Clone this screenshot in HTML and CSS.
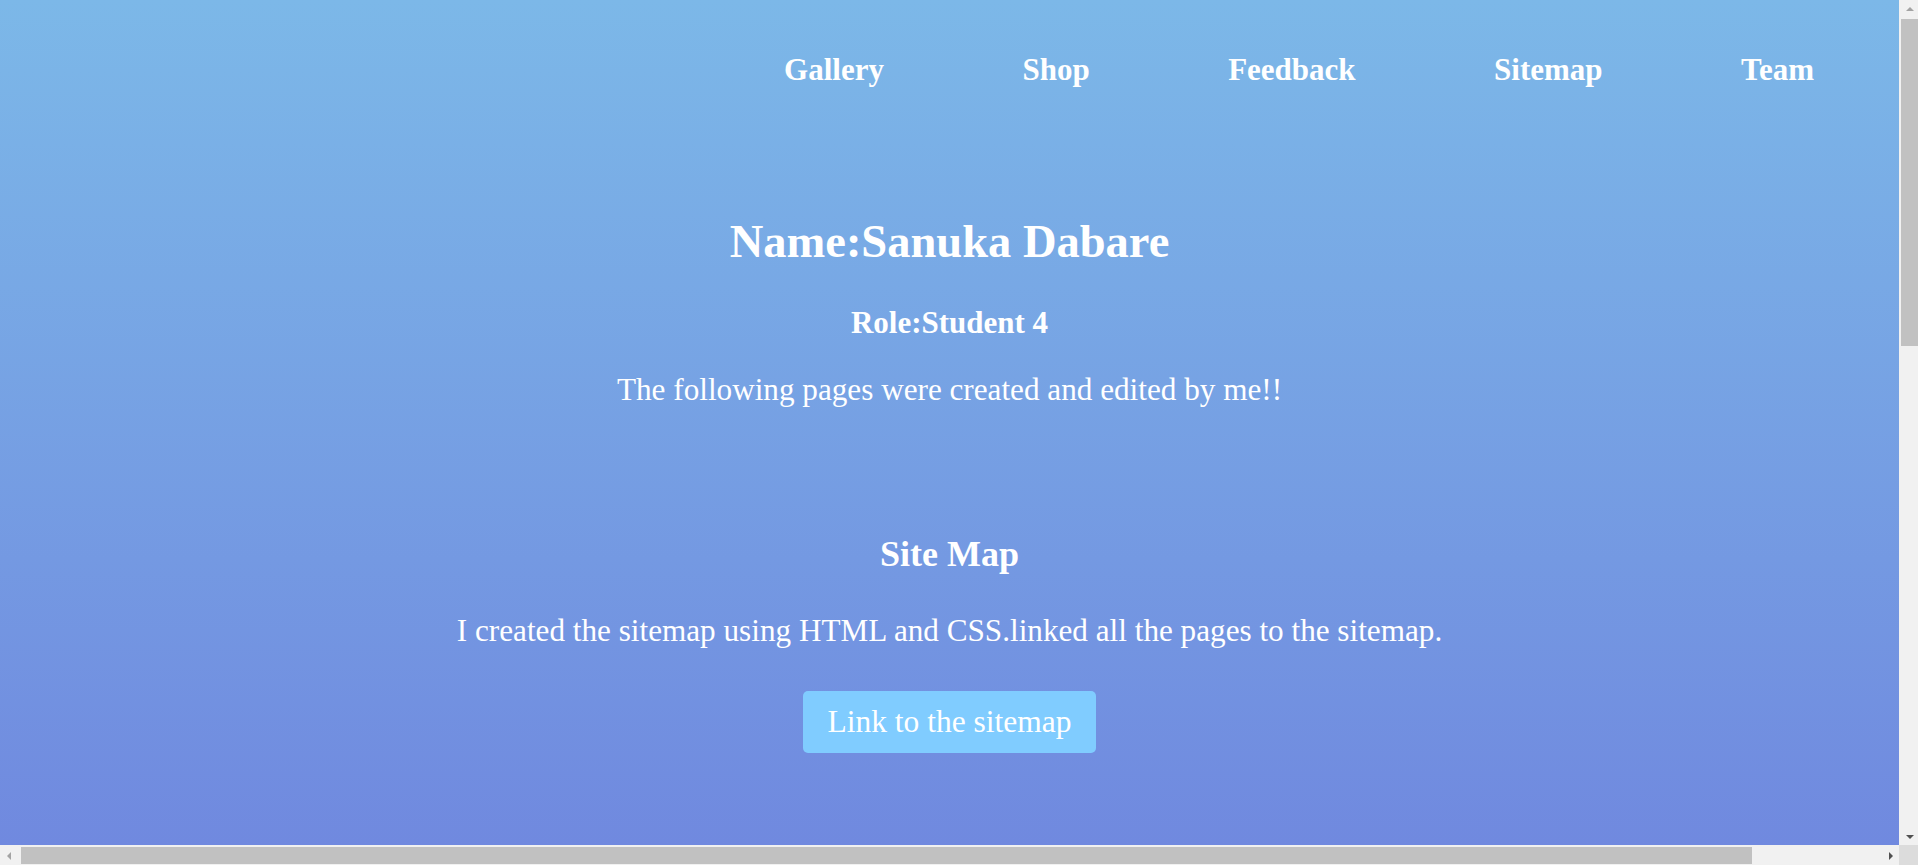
FILE: index.html
```html
<!DOCTYPE html>
<html lang="en">
<head>
<meta charset="utf-8">
<title>Team - Sanuka Dabare</title>
<link rel="stylesheet" href="styles.css">
</head>
<body>
<div class="page">
  <header class="site-header">
    <nav class="main-nav">
      <ul class="nav-list">
        <li><a class="nav-link" href="#">Gallery</a></li>
        <li><a class="nav-link" href="#">Shop</a></li>
        <li><a class="nav-link" href="#">Feedback</a></li>
        <li><a class="nav-link" href="#">Sitemap</a></li>
        <li><a class="nav-link" href="#">Team</a></li>
      </ul>
    </nav>
  </header>
  <main class="profile">
    <h1 class="profile-name">Name:Sanuka Dabare</h1>
    <h3 class="profile-role">Role:Student 4</h3>
    <p class="profile-intro">The following pages were created and edited by me!!</p>
    <section class="work">
      <h2 class="work-title">Site Map</h2>
      <p class="work-text">I created the sitemap using HTML and CSS.linked all the pages to the sitemap.</p>
      <a class="work-button" href="#">Link to the sitemap</a>
    </section>
  </main>
</div>

<div class="scrollbar scrollbar-v" aria-hidden="true">
  <span class="sb-btn sb-btn-v"><i class="arrow arrow-up"></i></span>
  <span class="sb-track sb-track-v"><span class="sb-thumb sb-thumb-v"></span></span>
  <span class="sb-btn sb-btn-v"><i class="arrow arrow-down"></i></span>
</div>
<div class="scrollbar scrollbar-h" aria-hidden="true">
  <span class="sb-btn sb-btn-h"><i class="arrow arrow-left"></i></span>
  <span class="sb-track sb-track-h"><span class="sb-thumb sb-thumb-h"></span></span>
  <span class="sb-btn sb-btn-h"><i class="arrow arrow-right"></i></span>
</div>
<div class="scrollbar-corner" aria-hidden="true"></div>
</body>
</html>
```
FILE: styles.css
```css
html, body {
  margin: 0;
  padding: 0;
}

body {
  font-family: "Liberation Serif", "Times New Roman", serif;
  color: #ffffff;
  background: linear-gradient(180deg, #7cb8e8 0px, #7089df 845px, #6a72d9 2093px);
  min-height: 100vh;
}

.page {
  margin-right: 19px;
  padding-bottom: 120px;
}

/* navigation */
.nav-list {
  display: flex;
  justify-content: flex-end;
  gap: 138.5px;
  margin: 0;
  padding: 52.4px 85px 0 0;
  list-style: none;
}

.nav-link {
  font-size: 31px;
  font-weight: bold;
  line-height: normal;
  color: #ffffff;
  text-decoration: none;
}

/* profile */
.profile {
  display: flex;
  flex-direction: column;
  align-items: center;
  text-align: center;
}

.profile-name {
  margin: 126.4px 0 0;
  font-size: 46.5px;
  font-weight: bold;
  line-height: normal;
}

.profile-role {
  margin: 37.4px 0 0;
  font-size: 31px;
  font-weight: bold;
  line-height: normal;
}

.profile-intro {
  margin: 31.1px 0 0;
  font-size: 31.2px;
  line-height: normal;
}

.work {
  display: flex;
  flex-direction: column;
  align-items: center;
}

.work-title {
  margin: 125.2px 0 0;
  font-size: 36px;
  font-weight: bold;
  line-height: normal;
}

.work-text {
  margin: 37.8px 0 0;
  font-size: 31.2px;
  line-height: normal;
}

.work-button {
  margin-top: 41.6px;
  padding: 13px 24.5px;
  font-size: 31.5px;
  line-height: normal;
  color: #ffffff;
  text-decoration: none;
  background: #80ccff;
  border-radius: 5px;
}

/* browser scrollbars (overlay chrome) */
.scrollbar {
  position: fixed;
  display: flex;
  background: #f1f1f1;
}

.scrollbar-v {
  top: 0;
  right: 0;
  width: 19px;
  height: 845px;
  flex-direction: column;
}

.scrollbar-h {
  left: 0;
  bottom: 0;
  width: 1899px;
  height: 20px;
  flex-direction: row;
}

.scrollbar-corner {
  position: fixed;
  right: 0;
  bottom: 0;
  width: 19px;
  height: 20px;
  background: #dcdcdc;
}

.sb-btn {
  display: flex;
  align-items: center;
  justify-content: center;
  flex: none;
}

.sb-btn-v {
  height: 17px;
  padding-left: 2px;
}

.sb-btn-h {
  width: 17px;
  padding-top: 2px;
}

.sb-track {
  flex: 1;
  display: flex;
}

.sb-track-v {
  flex-direction: column;
}

.sb-thumb {
  background: #c1c1c1;
}

.sb-thumb-v {
  margin: 2px 0 0 2px;
  height: 327px;
  flex: none;
  width: 17px;
}

.sb-thumb-h {
  margin: 2px 0 1px 4px;
  width: 1731px;
  flex: none;
}

.arrow {
  display: block;
  width: 0;
  height: 0;
}

.arrow-up {
  border-left: 4.5px solid transparent;
  border-right: 4.5px solid transparent;
  border-bottom: 4px solid #a3a3a3;
}

.arrow-down {
  border-left: 4.5px solid transparent;
  border-right: 4.5px solid transparent;
  border-top: 4px solid #505050;
}

.arrow-left {
  border-top: 4.5px solid transparent;
  border-bottom: 4.5px solid transparent;
  border-right: 4px solid #a3a3a3;
}

.arrow-right {
  border-top: 4.5px solid transparent;
  border-bottom: 4.5px solid transparent;
  border-left: 4px solid #505050;
}
```
